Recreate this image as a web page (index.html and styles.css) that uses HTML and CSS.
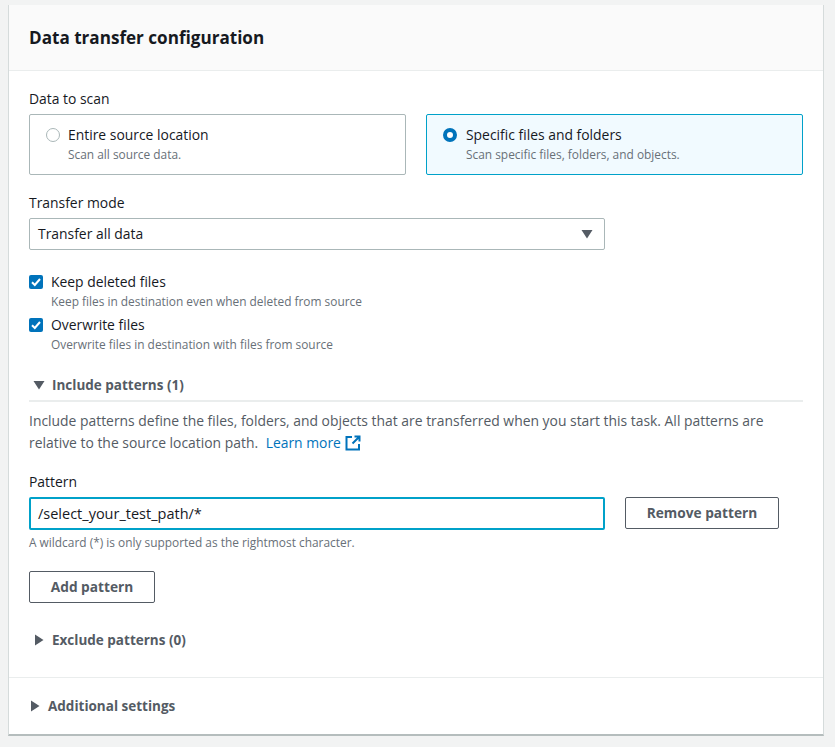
FILE: index.html
```html
<!DOCTYPE html>
<html lang="en">
  <head>
    <meta charset="UTF-8" />
    <title>Data transfer configuration</title>
    <link rel="stylesheet" href="styles.css">
  </head>
  <body>
    <section class="card">
      <header class="card-head">
        <h2>Data transfer configuration</h2>
      </header>
      <div class="card-body">
        <div class="label">Data to scan</div>
        <div class="tiles">
          <div class="tile">
            <span class="radio"></span>
            <div>
              <div class="tile-title">Entire source location</div>
              <div class="hint">Scan all source data.</div>
            </div>
          </div>
          <div class="tile selected">
            <span class="radio on"></span>
            <div>
              <div class="tile-title">Specific files and folders</div>
              <div class="hint">Scan specific files, folders, and objects.</div>
            </div>
          </div>
        </div>

        <div class="label mode-label">Transfer mode</div>
        <div class="select">
          <span>Transfer all data</span>
          <svg class="caret" width="12" height="10" viewBox="0 0 12 10"><path d="M0.5 1h11L6 9.5z" fill="#545b64"/></svg>
        </div>

        <div class="check first">
          <span class="box"><svg width="14" height="14" viewBox="0 0 14 14"><path d="M3 7.2l2.8 2.8L11 4" fill="none" stroke="#fff" stroke-width="2"/></svg></span>
          <div>
            <div class="check-title">Keep deleted files</div>
            <div class="hint">Keep files in destination even when deleted from source</div>
          </div>
        </div>
        <div class="check">
          <span class="box"><svg width="14" height="14" viewBox="0 0 14 14"><path d="M3 7.2l2.8 2.8L11 4" fill="none" stroke="#fff" stroke-width="2"/></svg></span>
          <div>
            <div class="check-title">Overwrite files</div>
            <div class="hint">Overwrite files in destination with files from source</div>
          </div>
        </div>

        <div class="expander open">
          <svg width="12" height="10" viewBox="0 0 12 10"><path d="M0.5 1h11L6 9.5z" fill="#545b64"/></svg>
          <span>Include patterns (1)</span>
        </div>
        <p class="desc">Include patterns define the files, folders, and objects that are transferred when you start this task. All patterns are relative to the source location path. <a href="javascript:;">Learn more <svg width="16" height="16" viewBox="0 0 16 16"><path d="M7 2H1.5v12.5H14V9M9.5 1.5h5v5M14.5 1.5L7.5 8.5" fill="none" stroke="#0073bb" stroke-width="2"/></svg></a></p>

        <div class="label pattern-label">Pattern</div>
        <div class="pattern-row">
          <div class="input">/select_your_test_path/*</div>
          <a class="btn remove" href="javascript:;">Remove pattern</a>
        </div>
        <div class="hint wildcard">A wildcard (*) is only supported as the rightmost character.</div>
        <a class="btn add" href="javascript:;">Add pattern</a>

        <div class="expander closed">
          <svg width="10" height="12" viewBox="0 0 10 12"><path d="M1 0.5v11L9.5 6z" fill="#545b64"/></svg>
          <span>Exclude patterns (0)</span>
        </div>
      </div>
      <div class="card-foot">
        <div class="expander">
          <svg width="10" height="12" viewBox="0 0 10 12"><path d="M1 0.5v11L9.5 6z" fill="#545b64"/></svg>
          <span>Additional settings</span>
        </div>
      </div>
    </section>
  </body>
</html>
```

FILE: styles.css
```css
* {
  margin: 0;
  padding: 0;
  box-sizing: border-box;
}
body {
  background-color: #f2f3f3;
  padding: 5px 11px 11px 8px;
  font-family: "Open Sans", "Noto Sans", sans-serif;
  font-size: 13.9px;
  line-height: 20px;
  color: #16191f;
}
a {
  text-decoration: none;
}
.card {
  background-color: #fff;
  height: 731px;
  border-right: 1px solid #d5dbdb;
  border-bottom: 2px solid #b5bdbd;
  border-left: 1px solid #d5dbdb;
}
.card-head {
  height: 66px;
  padding: 22px 20px 0;
  background-color: #fafafa;
  border-bottom: 1px solid #eaeded;
}
.card-head h2 {
  font-size: 17.1px;
  line-height: 22px;
  font-weight: 700;
}
.card-body {
  height: 607px;
  padding: 18px 20px 0;
  border-bottom: 1px solid #eaeded;
}
.label {
  height: 20px;
}
.tiles {
  display: flex;
  gap: 20px;
  margin-top: 5px;
}
.tile {
  display: flex;
  gap: 8px;
  width: 377px;
  height: 61px;
  padding: 10px 16px;
  border: 1px solid #aab7b8;
  border-radius: 2px;
}
.tile.selected {
  gap: 9px;
  background-color: #f1faff;
  border-color: #00a1c9;
}
.radio {
  width: 14px;
  height: 14px;
  margin-top: 3px;
  background-color: #fff;
  border: 1px solid #aab7b8;
  border-radius: 50%;
}
.radio.on {
  border: 4px solid #0073bb;
}
.tile-title,
.check-title {
  line-height: 20px;
}
.hint {
  font-size: 11.9px;
  line-height: 18px;
  color: #687078;
}
.mode-label {
  margin-top: 18px;
}
.select {
  display: flex;
  align-items: center;
  justify-content: space-between;
  width: 576px;
  height: 32px;
  margin-top: 5px;
  padding: 0 11px 0 8px;
  border: 1px solid #aab7b8;
  border-radius: 2px;
}
.check {
  display: flex;
  gap: 8px;
  height: 43px;
}
.check.first {
  margin-top: 22px;
}
.box {
  width: 14px;
  height: 14px;
  margin-top: 3px;
  background-color: #0073bb;
  border-radius: 2px;
}
.box svg {
  display: block;
}
.expander {
  display: flex;
  align-items: center;
  gap: 7px;
  height: 20px;
  font-size: 13.5px;
  font-weight: 700;
  color: #545b64;
}
.expander.open {
  margin-top: 17px;
  padding-left: 4px;
}
.desc {
  margin-top: 5px;
  padding-top: 8px;
  border-top: 2px solid #eaeded;
  line-height: 22px;
  color: #545b64;
}
.desc a {
  margin-left: 4px;
  color: #0073bb;
}
.desc svg {
  vertical-align: -3px;
}
.pattern-label {
  margin-top: 18px;
}
.pattern-row {
  display: flex;
  gap: 20px;
  margin-top: 5px;
}
.input {
  width: 576px;
  height: 33px;
  padding: 5px 7px;
  border: 2px solid #00a1c9;
  border-radius: 2px;
  font-size: 14.5px;
}
.btn {
  display: block;
  height: 32px;
  border: 1px solid #545b64;
  border-radius: 2px;
  font-size: 13.7px;
  font-weight: 700;
  line-height: 30px;
  text-align: center;
  color: #545b64;
}
.remove {
  width: 154px;
}
.add {
  width: 126px;
  margin-top: 20px;
}
.wildcard {
  margin-top: 3px;
}
.expander.closed {
  margin-top: 27px;
  padding-left: 5px;
  gap: 8px;
}
.card-foot {
  padding: 18px 20px 0 21px;
}
.card-foot .expander {
  gap: 8px;
}
```
